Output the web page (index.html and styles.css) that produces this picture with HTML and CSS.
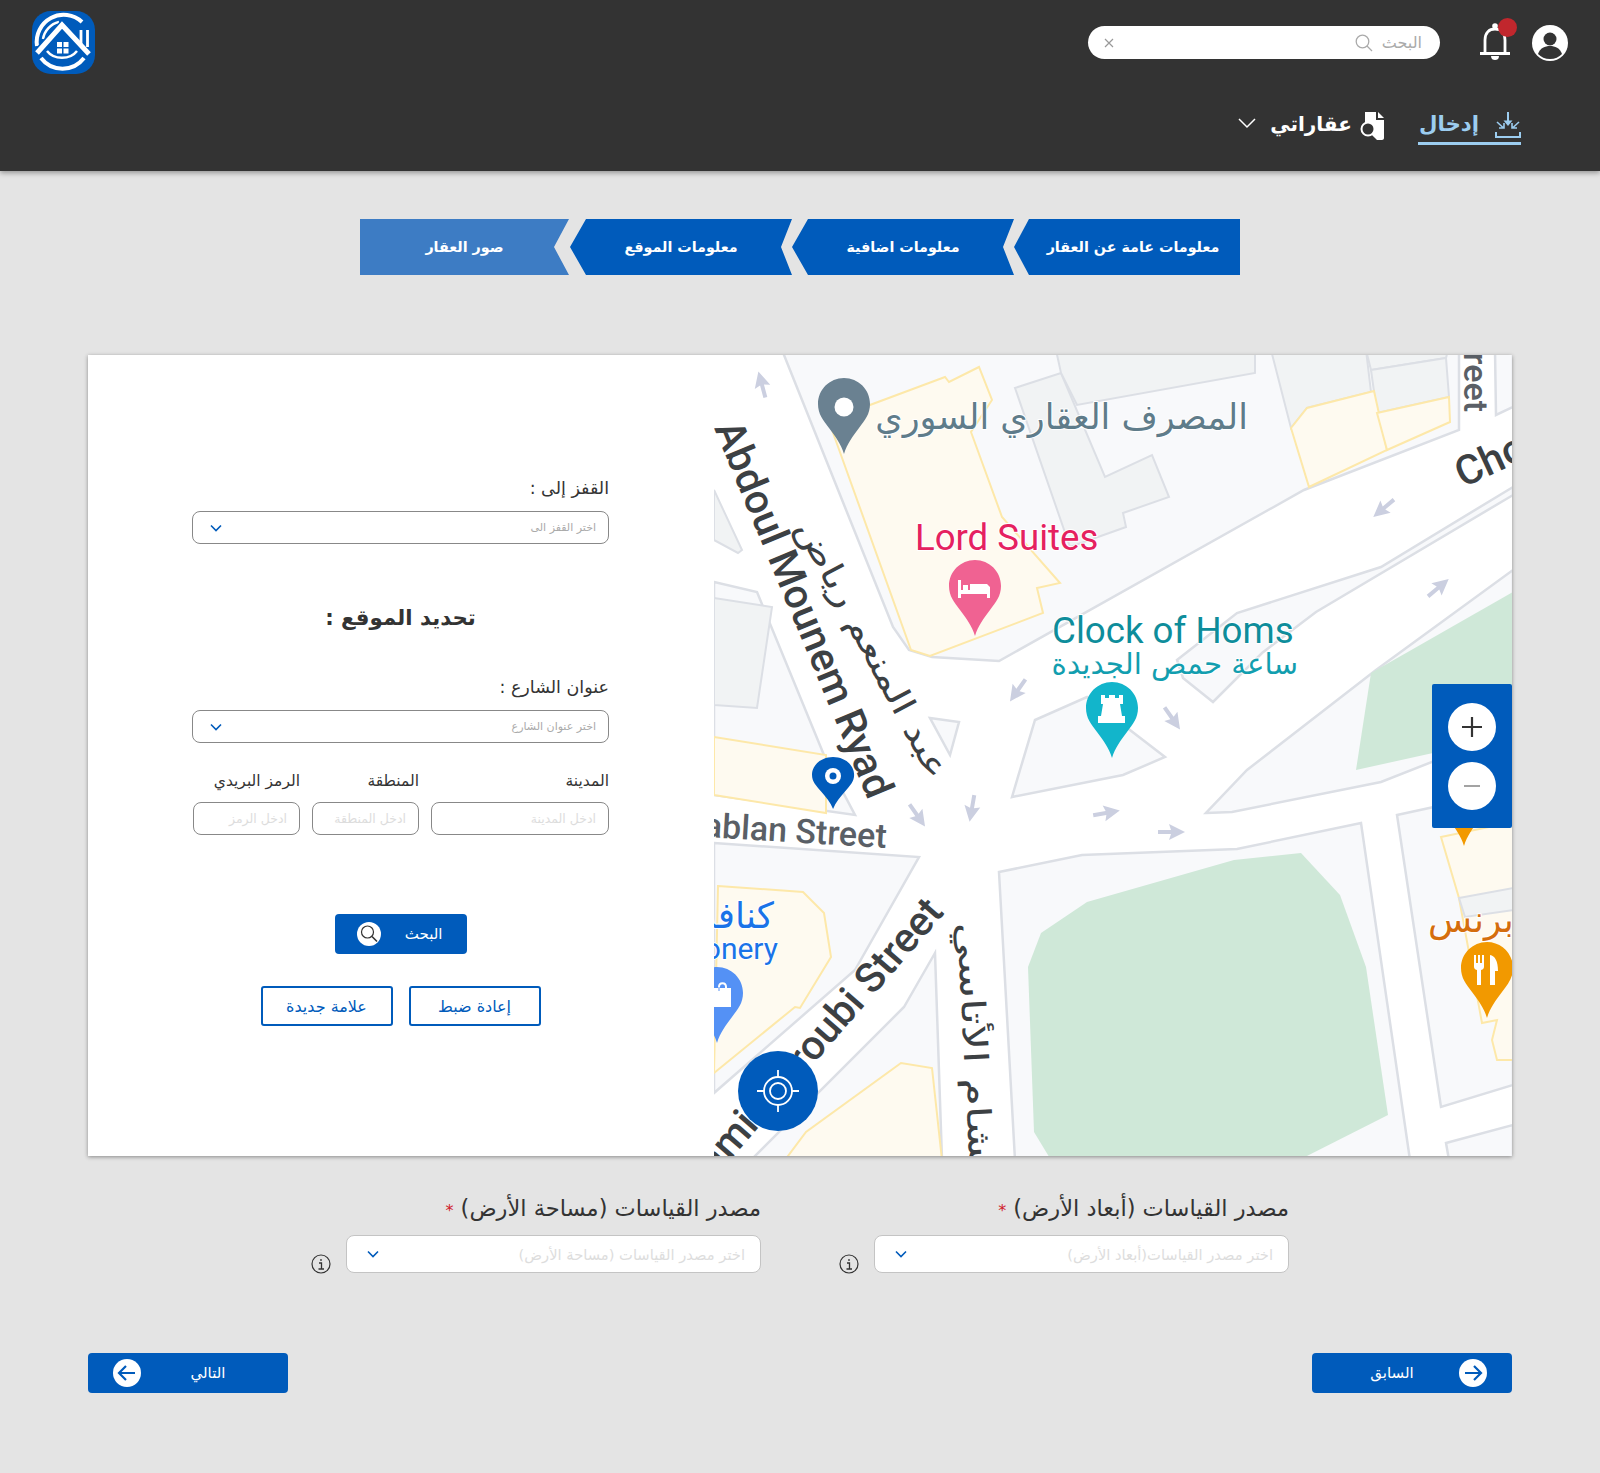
FILE: index.html
```html
<!DOCTYPE html>
<html lang="ar" dir="rtl">
<head>
<meta charset="utf-8">
<title>تحديد الموقع</title>
<link rel="stylesheet" href="styles.css">
</head>
<body>
<header class="header">
  <div class="top-row">
    <svg class="avatar" viewBox="0 0 36 36"><circle cx="18" cy="18" r="18" fill="#fff"/><circle cx="18" cy="14" r="6.500" fill="#333"/><path d="M6 29c2-6 7-8 12-8s10 2 12 8c-3 3-7 5-12 5s-9-2-12-5z" fill="#333"/></svg>
    <div class="bell">
      <svg viewBox="0 0 32 38" width="32" height="38"><path d="M6 30V17C6 10 10 6 16 6s10 4 10 11v13" fill="none" stroke="#fff" stroke-width="2.800"/><path d="M1 30.500h30" stroke="#fff" stroke-width="3"/><circle cx="16" cy="3" r="2.800" fill="#fff"/><path d="M12 33h8c0 3-2 4-4 4s-4-1-4-4z" fill="#fff"/></svg>
      <span class="bell-dot"></span>
    </div>
    <div class="search">
      <span class="search-text">البحث</span>
      <svg class="search-icon" viewBox="0 0 18 18"><circle cx="7.500" cy="7.500" r="6.300" fill="none" stroke="#aaa" stroke-width="1.300"/><path d="M12 12l5 5" stroke="#aaa" stroke-width="1.300"/></svg>
      <svg class="search-close" viewBox="0 0 10 10"><path d="M1 1l8 8M9 1l-8 8" stroke="#999" stroke-width="1.200"/></svg>
    </div>
    <svg class="logo" viewBox="0 0 63 63">
      <rect width="63" height="63" rx="19" fill="#005bbb"/>
      <path d="M5 35A27 27 0 0 1 50 11" fill="none" stroke="#fff" stroke-width="4"/>
      <path d="M11 28A21 21 0 0 1 27 11" fill="none" stroke="#fff" stroke-width="2.500"/>
      <path d="M9 47A27 27 0 0 0 52 47" fill="none" stroke="#fff" stroke-width="4"/>
      <path d="M15 40C22 49 38 49 45 40" fill="none" stroke="#fff" stroke-width="2.500"/>
      <path d="M5 42L30 14L57 43" fill="none" stroke="#005bbb" stroke-width="8"/>
      <path d="M5 42L30 14L57 43" fill="none" stroke="#fff" stroke-width="5"/>
      <path d="M49 19v14M55.500 19v17" stroke="#fff" stroke-width="2.800"/>
      <path d="M25 31h5v5h-5zM31.500 31h5v5h-5zM25 37.500h5v5h-5zM31.500 37.500h5v5h-5z" fill="#fff"/>
    </svg>
  </div>
  <nav class="nav-row">
    <a class="nav-item nav-active">
      <svg viewBox="0 0 26 26" width="26" height="26"><path d="M13 0v11" fill="none" stroke="#9ccdf0" stroke-width="2"/><path d="M8.500 8.500h9L13 14z" fill="#9ccdf0"/><path d="M2 10l6 5.500M4 16H9v-5M24 10l-6 5.500M22 16H17v-5" fill="none" stroke="#9ccdf0" stroke-width="1.600"/><path d="M1 20v5h24v-5" fill="none" stroke="#9ccdf0" stroke-width="2"/></svg>
      <span>إدخال</span>
    </a>
    <a class="nav-item">
      <svg viewBox="0 0 26 28" width="26" height="28"><path d="M6 0h11v8h8v18c0 1-1 2-2 2H18l-5-5a9 9 0 0 0-7-12z" fill="#fff"/><path d="M19 0l6 6h-6z" fill="#fff"/><circle cx="9" cy="17" r="6.500" fill="#333" stroke="#fff" stroke-width="2"/><path d="M13.500 21.500l7 5.500" stroke="#fff" stroke-width="2.600"/></svg>
      <span>عقاراتي</span>
      <svg class="nav-chevron" viewBox="0 0 18 11" width="18" height="11"><path d="M1 1l8 8 8-8" fill="none" stroke="#fff" stroke-width="1.500"/></svg>
    </a>
  </nav>
</header>

<main class="main">
  <ol class="steps">
    <li class="step step-first">معلومات عامة عن العقار</li>
    <li class="step step-mid">معلومات اضافية</li>
    <li class="step step-mid">معلومات الموقع</li>
    <li class="step step-last">صور العقار</li>
  </ol>

  <section class="card">
    <div class="map">
      <svg class="map-svg" viewBox="714 355 798 801" width="798" height="801">
        <defs>
          <path id="pin" d="M26 0C11.600 0 0 11.600 0 26c0 10 5 16 11 24 6 8 12 16 15 26 3-10 9-18 15-26 6-8 11-14 11-24C52 11.600 40.400 0 26 0z"/>
          <path id="arrow" d="M0-14L8 2 2 0V13H-2V0L-8 2z"/>
        </defs>
        <rect x="714" y="355" width="799" height="801" fill="#fff"/>
        <polygon class="block" points="782,350 893,627 909,650 932,657 999,661 1304,490 1459,430 1459,350"/>
        <polygon class="bldg" points="1015,388 1061,373 1105,477 1152,455 1169,497 1123,513 1126,527 1070,547"/>
        <polygon class="bldg" points="1056,350 1061,373 1077,405 1255,373 1255,350"/>
        <polygon class="bldg" points="1271,350 1291,428 1307,408 1371,392 1366,350"/>
        <polygon class="bldg" points="1366,350 1371,370 1446,358 1448,350"/>
        <polygon class="bldg" points="1371,370 1446,358 1449,397 1377,413"/>
        <polygon class="yellow" points="1291,428 1307,408 1374,391 1387,450 1309,487"/>
        <polygon class="yellow" points="1377,413 1449,397 1450,422 1387,450"/>
        <polygon class="yellow" points="832,430 870,405 945,377 949,382 979,367 992,400 971,432 1002,517 1060,583 1037,588 1043,613 930,656 911,650"/>
        <polygon class="block" points="1495,350 1496,415 1513,407 1513,350"/>
        <polygon class="block" points="1513,487 1513,495 1316,612 1262,653 1213,702 1183,678 1177,660 1237,613 1381,567"/>
        <polygon class="block" points="1012,797 1020,770 1035,720 1087,697 1165,757 1123,775"/>
        <polygon class="block" points="1206,813 1232,812 1381,782 1513,730 1513,570 1376,670 1247,770"/>
        <polygon class="park" points="1513,592 1371,673 1356,770 1433,753 1513,730"/>
        <polygon class="block" points="930,718 959,722 950,755"/>
        <polygon class="block" points="714,582 757,592 826,760 855,815 714,795"/>
        <polygon class="bldg" points="714,598 772,607 757,708 714,705"/>
        <polygon class="bldg" points="714,490 742,550 738,553 714,540"/>
        <polygon class="yellow" points="714,737 826,755 826,813 714,795"/>
        <polygon class="block" points="714,843 919,857 855,970 714,1093"/>
        <polygon class="yellow" points="718,886 803,892 824,913 831,957 800,1008 795,1007 714,1073"/>
        <polygon class="block" points="935,953 904,1007 751,1160 942,1160"/>
        <polygon class="yellow" points="785,1160 806,1132 901,1063 932,1068 942,1160"/>
        <polygon class="block" points="999,872 1082,855 1237,849 1361,823 1410,1160 1015,1160"/>
        <polygon class="park" points="1028,967 1041,933 1087,902 1234,860 1301,853 1340,895 1366,967 1388,1115 1299,1160 1051,1160 1034,1132"/>
        <polygon class="block" points="1397,815 1443,805 1513,785 1513,1085 1441,1107"/>
        <polygon class="yellow" points="1441,837 1513,822 1513,1060 1497,1060 1492,1040 1497,1020 1482,1023 1459,898"/>
        <polygon class="bldg" points="1459,898 1513,888 1513,910 1465,917"/>
        <polygon class="block" points="1446,1143 1513,1125 1513,1160 1449,1160"/>

        <use href="#arrow" class="map-arrow" transform="translate(762 385) rotate(-15)"/>
        <use href="#arrow" class="map-arrow" transform="translate(1384 508) rotate(-130)"/>
        <use href="#arrow" class="map-arrow" transform="translate(1438 588) rotate(50)"/>
        <use href="#arrow" class="map-arrow" transform="translate(1018 690) rotate(-145)"/>
        <use href="#arrow" class="map-arrow" transform="translate(1172 718) rotate(145)"/>
        <use href="#arrow" class="map-arrow" transform="translate(917 815) rotate(145)"/>
        <use href="#arrow" class="map-arrow" transform="translate(972 808) rotate(190)"/>
        <use href="#arrow" class="map-arrow" transform="translate(1106 813) rotate(80)"/>
        <use href="#arrow" class="map-arrow" transform="translate(1171 832) rotate(90)"/>

        <text class="road road-thin" transform="translate(1464 412) rotate(90)" text-anchor="end">Street</text>
        <text class="road" transform="translate(1463 488) rotate(-25)">Cho</text>
        <text class="road" transform="translate(714 428) rotate(67.500)">Abdoul Mounem Ryad</text>
        <text class="road-ar" transform="translate(795 527) rotate(62)" textLength="288" lengthAdjust="spacingAndGlyphs">عبد المنعم رياض</text>
        <text class="road road-thin" transform="translate(886 848) rotate(3.500)" text-anchor="end">Sablan Street</text>
        <text class="road" transform="translate(945 913) rotate(-49)" text-anchor="end">Sami Maroubi Street</text>
        <text class="road-ar" transform="translate(957 923) rotate(87)" textLength="262" lengthAdjust="spacingAndGlyphs">هشام الأتاسي</text>

        <text class="lbl lbl-bank" x="1248" y="429" text-anchor="end">المصرف العقاري السوري</text>
        <text class="lbl lbl-hotel" x="915" y="550">Lord Suites</text>
        <text class="lbl lbl-clock" x="1052" y="643">Clock of Homs</text>
        <text class="lbl lbl-clock-ar" x="1298" y="674" text-anchor="end">ساعة حمص الجديدة</text>
        <text class="lbl lbl-shop-ar" x="774" y="928" text-anchor="end">كنافة</text>
        <text class="lbl lbl-shop" x="778" y="959" text-anchor="end">Confectionery</text>
        <text class="lbl lbl-food" x="1428" y="932">برنس</text>

        <g transform="translate(818 378)"><use href="#pin" fill="#6a8191"/><circle cx="26" cy="29" r="9.500" fill="#fff"/></g>
        <g transform="translate(949 560)"><use href="#pin" fill="#f06292"/><path d="M9 20h3v10h2v-5h5v5h2v-6h17l3 3v11h-3v-4H12v4H9z" fill="#fff"/></g>
        <g transform="translate(1086 682)"><use href="#pin" fill="#12b5cb"/><path d="M15 13h4v3h4v-3h6v3h4v-3h4v9h-3l2 12h3v7H12v-7h3l2-12h-2z" fill="#fff"/></g>
        <g transform="translate(691 967)"><use href="#pin" fill="#5491f5"/><path d="M23 21h17v19H23z" fill="#fff"/><path d="M28 24v-4c0-5 7-5 7 0v4" fill="none" stroke="#fff" stroke-width="2"/><path d="M28 24v-4" fill="none" stroke="#5491f5" stroke-width="1"/></g>
        <g transform="translate(1461 942)"><use href="#pin" fill="#f29900"/><path d="M13 13h2v8h2v-8h2v8h2v-8h2v12c0 2-2 3-3 3v15h-4V28c-1 0-3-1-3-3zM29 13c5 1 8 6 8 16h-3v14h-5z" fill="#fff"/></g>
        <g transform="translate(1438 770)"><use href="#pin" fill="#f29900"/></g>
        <g transform="translate(812 757) scale(.81 .684)"><use href="#pin" fill="#005bbb"/></g>
        <circle cx="833" cy="776" r="8" fill="#fff"/><circle cx="833" cy="776" r="3.500" fill="#005bbb"/>
      </svg>
      <div class="zoom-ctl">
        <button class="zoom-btn"><svg viewBox="0 0 22 22" width="22" height="22"><path d="M11 1v20M1 11h20" stroke="#333" stroke-width="2.200"/></svg></button>
        <button class="zoom-btn"><svg viewBox="0 0 22 22" width="22" height="22"><path d="M3 11h16" stroke="#999" stroke-width="1.800"/></svg></button>
      </div>
      <button class="locate">
        <svg viewBox="0 0 44 44" width="44" height="44"><circle cx="22" cy="22" r="14" fill="none" stroke="#fff" stroke-width="1.800"/><circle cx="22" cy="22" r="8" fill="none" stroke="#fff" stroke-width="1.800"/><path d="M22 1v7M22 36v7M1 22h7M36 22h7" stroke="#fff" stroke-width="1.800"/></svg>
      </button>
    </div>

    <form class="panel">
      <label class="lbl-main">القفز إلى :</label>
      <div class="select"><span>اختر القفز الى</span><svg class="chev" viewBox="0 0 12 8"><path d="M1 1.500l5 5 5-5" fill="none" stroke="#005bbb" stroke-width="1.600"/></svg></div>
      <h2 class="panel-title">تحديد الموقع :</h2>
      <label class="lbl-main">عنوان الشارع :</label>
      <div class="select"><span>اختر عنوان الشارع</span><svg class="chev" viewBox="0 0 12 8"><path d="M1 1.500l5 5 5-5" fill="none" stroke="#005bbb" stroke-width="1.600"/></svg></div>
      <div class="fields">
        <div class="field"><label>المدينة</label><div class="input">ادخل المدينة</div></div>
        <div class="field"><label>المنطقة</label><div class="input">ادخل المنطقة</div></div>
        <div class="field"><label>الرمز البريدي</label><div class="input">ادخل الرمز</div></div>
      </div>
      <div class="search-btn-wrap">
        <button type="button" class="btn-search"><span>البحث</span>
          <svg viewBox="0 0 24 24" width="24" height="24"><circle cx="12" cy="12" r="12" fill="#fff"/><circle cx="10.500" cy="10" r="6" fill="none" stroke="#333" stroke-width="1.200"/><path d="M15 14.500l5 5" stroke="#333" stroke-width="1.600"/></svg>
        </button>
      </div>
      <div class="outline-row">
        <button type="button" class="btn-outline">إعادة ضبط</button>
        <button type="button" class="btn-outline">علامة جديدة</button>
      </div>
    </form>
  </section>

  <section class="sources">
    <div class="source">
      <div class="source-label">مصدر القياسات (أبعاد الأرض) <span class="req">*</span></div>
      <div class="source-row">
        <div class="source-select"><span>اختر مصدر القياسات(أبعاد الأرض)</span><svg class="chev" viewBox="0 0 12 8"><path d="M1 1.500l5 5 5-5" fill="none" stroke="#005bbb" stroke-width="1.600"/></svg></div>
        <svg class="info" viewBox="0 0 20 20"><circle cx="10" cy="10" r="9" fill="none" stroke="#333" stroke-width="1.200"/><path d="M10 5v2M8 9h2.500v6M7.500 15h5.500" fill="none" stroke="#333" stroke-width="1.300"/></svg>
      </div>
    </div>
    <div class="source">
      <div class="source-label">مصدر القياسات (مساحة الأرض) <span class="req">*</span></div>
      <div class="source-row">
        <div class="source-select"><span>اختر مصدر القياسات (مساحة الأرض)</span><svg class="chev" viewBox="0 0 12 8"><path d="M1 1.500l5 5 5-5" fill="none" stroke="#005bbb" stroke-width="1.600"/></svg></div>
        <svg class="info" viewBox="0 0 20 20"><circle cx="10" cy="10" r="9" fill="none" stroke="#333" stroke-width="1.200"/><path d="M10 5v2M8 9h2.500v6M7.500 15h5.500" fill="none" stroke="#333" stroke-width="1.300"/></svg>
      </div>
    </div>
  </section>

  <div class="pager">
    <button class="pager-btn pager-prev">
      <svg viewBox="0 0 28 28" width="28" height="28"><circle cx="14" cy="14" r="14" fill="#fff"/><path d="M6 14h16M15 7l7 7-7 7" fill="none" stroke="#005bbb" stroke-width="2.200"/></svg>
      <span>السابق</span>
    </button>
    <button class="pager-btn pager-next">
      <span>التالي</span>
      <svg viewBox="0 0 28 28" width="28" height="28"><circle cx="14" cy="14" r="14" fill="#fff"/><path d="M22 14H6M13 7l-7 7 7 7" fill="none" stroke="#005bbb" stroke-width="2.200"/></svg>
    </button>
  </div>
</main>
</body>
</html>
```

FILE: styles.css
```css
* { box-sizing: border-box; }
html, body { margin: 0; padding: 0; }
body {
  background: #e4e4e4;
  color: #333;
  font-family: "DejaVu Sans", "Noto Sans", sans-serif;
  min-height: 1473px;
}
button { font-family: inherit; border: 0; cursor: pointer; }

/* header */
.header {
  background: #333;
  height: 171px;
  box-shadow: 0 2px 5px rgba(0, 0, 0, .35);
}
.top-row {
  height: 85px;
  display: flex;
  align-items: center;
  padding: 0 32px;
}
.avatar { width: 36px; height: 36px; }
.bell { position: relative; width: 32px; height: 38px; margin: -1px 21px 0 0; }
.bell-dot {
  position: absolute; top: -5px; left: 19px;
  width: 19px; height: 19px; border-radius: 50%;
  background: #c1272d;
}
.search {
  width: 352px; height: 33px; margin-right: 39px;
  background: #fff; border-radius: 17px;
  display: flex; align-items: center;
  padding: 0 18px 0 16px;
  font-size: 16px; color: #aaa;
}
.search-icon { width: 18px; height: 18px; margin-right: 9px; }
.search-close { width: 10px; height: 10px; margin-right: auto; }
.logo { width: 63px; height: 63px; margin-right: auto; }
.nav-row {
  display: flex;
  gap: 33px;
  padding: 20px 79px 0 0;
}
.nav-item {
  height: 40px;
  display: flex; align-items: flex-start; gap: 7px;
  color: #fff; font-size: 20px; font-weight: 700;
  line-height: 38px;
}
.nav-item svg { margin-top: 7px; }
.nav-item .nav-chevron { margin: 13px 7px 0 0; }
.nav-active { color: #9ccdf0; font-size: 21.300px; gap: 16px; border-bottom: 3px solid #9ccdf0; padding: 0 0 0 1px; }

/* steps */
.main { display: block; }
.steps {
  list-style: none;
  margin: 48px 360px 0 0;
  padding: 0;
  display: flex;
}
.step {
  height: 56px;
  background: #005bbb;
  color: #fff;
  font-size: 14.300px;
  font-weight: 700;
  display: flex; align-items: center; justify-content: center;
}
.step-first { width: 226px; padding-left: 12px; clip-path: polygon(15px 0, 100% 0, 100% 100%, 15px 100%, 0 50%); }
.step-mid { width: 222px; clip-path: polygon(16px 0, 100% 0, calc(100% - 11px) 50%, 100% 100%, 16px 100%, 0 50%); }
.step-last { width: 209px; margin-right: 1px; background: #3d7cc4; clip-path: polygon(0 0, 100% 0, calc(100% - 15px) 50%, 100% 100%, 0 100%); }

/* card */
.card {
  margin: 80px 88px 0;
  height: 801px;
  background: #fff;
  display: flex;
  box-shadow: 0 1px 4px rgba(0, 0, 0, .4);
}
.map { position: relative; width: 798px; flex: none; overflow: hidden; direction: ltr; }
.map-svg { display: block; direction: ltr; }
.block { fill: #f8f9fb; stroke: #dcdfe5; stroke-width: 2.500; }
.bldg { fill: #f1f3f4; stroke: #dcdfe5; stroke-width: 2; }
.yellow { fill: #fefaf0; stroke: #fde8a9; stroke-width: 2; }
.park { fill: #cfe8d8; }
.map-arrow { fill: #cbcfe0; }
.road, .road-ar, .lbl { paint-order: stroke; stroke: #fff; stroke-width: 2px; stroke-linejoin: round; }
.road { font-family: Roboto, sans-serif; font-weight: 500; font-size: 41px; fill: #3c4043; }
.road-thin { font-size: 34px; fill: #5a5f66; }
.road-ar { font-family: "DejaVu Sans", sans-serif; font-size: 33px; fill: #3c4043; }
.lbl { font-family: Roboto, sans-serif; font-size: 37px; }
.lbl-bank { font-family: "DejaVu Sans", sans-serif; font-size: 35px; fill: #5f7c8a; }
.lbl-hotel { font-size: 36.600px; fill: #e5215f; }
.lbl-clock { font-size: 36.700px; fill: #0e8d9b; }
.lbl-clock-ar { font-family: "DejaVu Sans", sans-serif; font-size: 29.300px; fill: #129eaf; }
.lbl-shop-ar { font-family: "DejaVu Sans", sans-serif; font-size: 36px; fill: #1a73e8; }
.lbl-shop { font-size: 30px; fill: #1a73e8; }
.lbl-food { font-family: "DejaVu Sans", sans-serif; font-size: 36px; fill: #d56e0c; }

.zoom-ctl {
  position: absolute; right: 0; top: 329px;
  width: 80px; height: 144px;
  background: #005bbb;
  border-radius: 2px;
  display: flex; flex-direction: column; align-items: center; gap: 11px;
  padding-top: 19px;
}
.zoom-btn {
  width: 48px; height: 48px; border-radius: 50%;
  background: #fff; padding: 0;
  display: flex; align-items: center; justify-content: center;
}
.locate {
  position: absolute; left: 24px; top: 696px;
  width: 80px; height: 80px; border-radius: 50%;
  background: #005bbb; padding: 0;
  display: flex; align-items: center; justify-content: center;
}

/* panel */
.panel {
  flex: 1;
  padding: 121px 105px 0 104px;
}
.lbl-main { display: block; height: 24px; line-height: 24px; font-size: 17.500px; color: #333; }
.select {
  margin-top: 11px; height: 33px;
  border: 1px solid #888; border-radius: 8px;
  background: #fff;
  display: flex; align-items: center; justify-content: space-between;
  padding: 0 12px 0 17px;
  font-size: 11px; color: #aaa;
}
.chev { width: 12px; height: 8px; }
.panel-title {
  margin: 59px 0 42px; height: 30px; line-height: 30px;
  text-align: center; font-size: 21.300px; font-weight: 700; color: #333;
}
.fields { display: grid; grid-template-columns: 178px 107px 107px; gap: 12px; margin-top: 28px; }
.field label { display: block; height: 20px; line-height: 20px; font-size: 15.500px; color: #333; white-space: nowrap; }
.input {
  margin-top: 11px; height: 33px;
  border: 1px solid #888; border-radius: 8px; background: #fff;
  line-height: 31px; padding: 0 12px;
  font-size: 12.500px; color: #ddd;
  white-space: nowrap; overflow: hidden;
}
.search-btn-wrap { display: flex; justify-content: center; margin-top: 79px; }
.btn-search {
  width: 132px; height: 40px; border-radius: 4px;
  background: #005bbb; color: #fff;
  font-size: 15px;
  display: flex; align-items: center; justify-content: space-between;
  padding: 0 24px 0 22px;
}
.outline-row { display: flex; justify-content: center; gap: 16px; margin-top: 32px; }
.btn-outline {
  width: 132px; height: 40px; border-radius: 3px;
  background: #fff; color: #005bbb;
  border: 2px solid #005bbb;
  font-size: 16px;
}

/* source selects */
.sources { display: flex; gap: 78px; margin-top: 38px; padding-right: 311px; }
.source { width: 450px; }
.source-label { height: 28px; line-height: 28px; font-size: 22.500px; color: #333; white-space: nowrap; }
.req { color: #d0202a; font-size: 16px; }
.source-row { display: flex; gap: 15px; margin-top: 13px; }
.source-select {
  width: 415px; height: 38px;
  background: #fff; border: 1px solid #c4c4c4; border-radius: 8px;
  display: flex; align-items: center; justify-content: space-between;
  padding: 0 15px 0 20px;
  font-size: 14.700px; color: #ddd;
}
.info { width: 20px; height: 20px; align-self: flex-end; margin-bottom: -1px; }

/* pager */
.pager { display: flex; justify-content: space-between; margin-top: 80px; padding: 0 88px; }
.pager-btn {
  width: 200px; height: 40px; border-radius: 4px;
  background: #005bbb; color: #fff; font-size: 15px;
  display: flex; align-items: center;
}
.pager-btn span { flex: 1; text-align: center; }
.pager-prev { padding: 0 25px 0 13px; }
.pager-next { padding: 0 13px 0 25px; }
```
